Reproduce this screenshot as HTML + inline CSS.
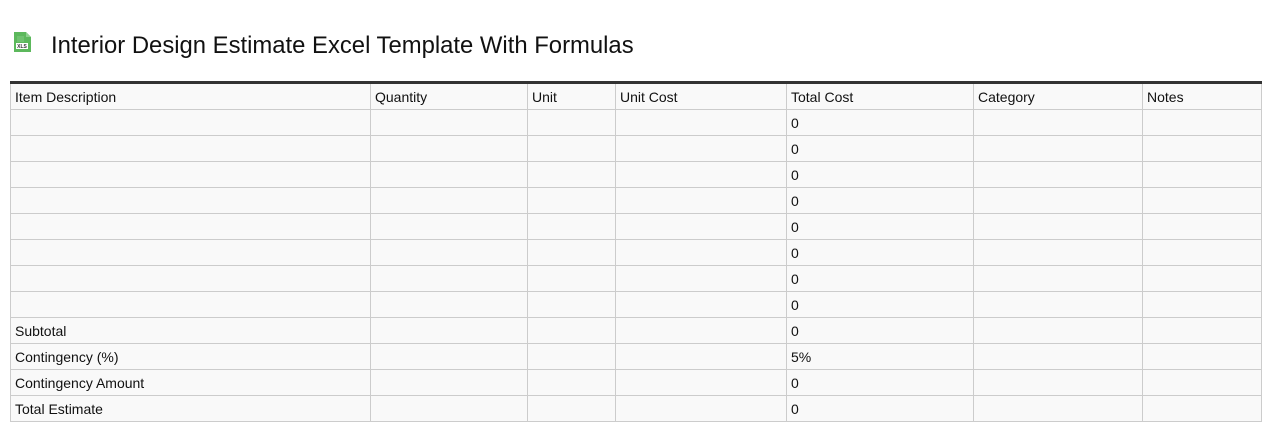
<!DOCTYPE html>
<html><head><style>
body{margin:0;background:#fff;font-family:"Liberation Sans",Arial,sans-serif;width:1262px;height:422px;overflow:hidden;position:relative}
h1{position:absolute;left:51px;top:31px;margin:0;font-size:23.85px;font-weight:normal;color:#111;line-height:30px}
.ic{position:absolute;left:13px;top:31px}
table{position:absolute;left:10px;top:81px;border-collapse:collapse;border-top:3px solid #333;width:1251px;table-layout:fixed}
td{border:1px solid #ccc;background:#f9f9f9;height:26px;padding:0 4px;font-size:14px;color:#111;box-sizing:border-box}
tr.h td{height:27px}
</style></head><body>
<svg class="ic" width="20" height="22" viewBox="0 0 20 22"><path d="M1 1h12l5 5v15H1z" fill="#5cb85c"/><path d="M13 1v5h5" fill="#8fd18f"/><rect x="3" y="12" width="12" height="6" fill="#fff"/><text x="9" y="17" font-size="5" font-family="Liberation Sans" font-weight="bold" text-anchor="middle" fill="#333">XLS</text><path d="M4 6h7M4 8h7M4 10h7" stroke="#8fd18f" stroke-width="0.8"/></svg>
<h1>Interior Design Estimate Excel Template With Formulas</h1>
<table>
<colgroup><col style="width:360px"><col style="width:157px"><col style="width:88px"><col style="width:171px"><col style="width:187px"><col style="width:169px"><col style="width:119px"></colgroup>
<tr class="h"><td>Item Description</td><td>Quantity</td><td>Unit</td><td>Unit Cost</td><td>Total Cost</td><td>Category</td><td>Notes</td></tr>
<tr><td></td><td></td><td></td><td></td><td>0</td><td></td><td></td></tr>
<tr><td></td><td></td><td></td><td></td><td>0</td><td></td><td></td></tr>
<tr><td></td><td></td><td></td><td></td><td>0</td><td></td><td></td></tr>
<tr><td></td><td></td><td></td><td></td><td>0</td><td></td><td></td></tr>
<tr><td></td><td></td><td></td><td></td><td>0</td><td></td><td></td></tr>
<tr><td></td><td></td><td></td><td></td><td>0</td><td></td><td></td></tr>
<tr><td></td><td></td><td></td><td></td><td>0</td><td></td><td></td></tr>
<tr><td></td><td></td><td></td><td></td><td>0</td><td></td><td></td></tr>
<tr><td>Subtotal</td><td></td><td></td><td></td><td>0</td><td></td><td></td></tr>
<tr><td>Contingency (%)</td><td></td><td></td><td></td><td>5%</td><td></td><td></td></tr>
<tr><td>Contingency Amount</td><td></td><td></td><td></td><td>0</td><td></td><td></td></tr>
<tr><td>Total Estimate</td><td></td><td></td><td></td><td>0</td><td></td><td></td></tr>
</table>
</body></html>
